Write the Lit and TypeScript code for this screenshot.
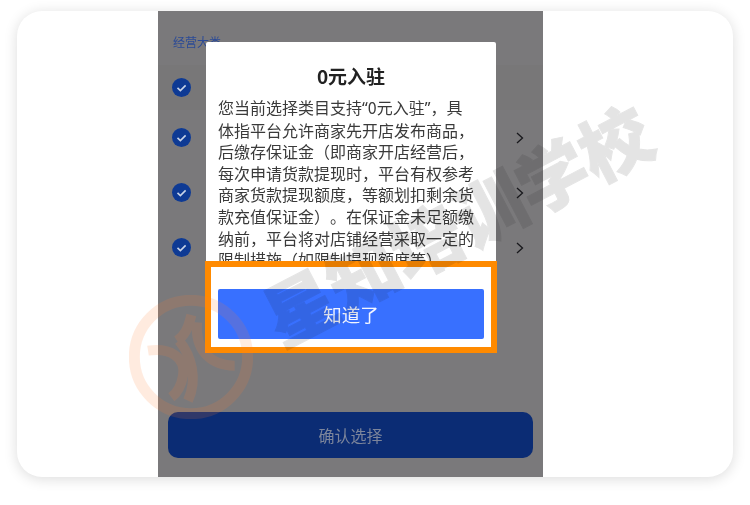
import { LitElement, html, css, svg } from "lit";
import { customElement } from "lit/decorators.js";

const LINES = [
  html`您当前选择类目支持<span class="q">“</span>0元入驻<span class="q">”</span>，具`,
  "体指平台允许商家先开店发布商品，",
  "后缴存保证金（即商家开店经营后，",
  "每次申请货款提现时，平台有权参考",
  "商家货款提现额度，等额划扣剩余货",
  "款充值保证金）。在保证金未足额缴",
  "纳前，平台将对店铺经营采取一定的",
  "限制措施（如限制提现额度等）",
];

@customElement("app-root")
export class AppRoot extends LitElement {
  static styles = css`
    :host {
      display: block;
      width: 750px;
      height: 505px;
      background: #fff;
      font-family: "Noto Sans CJK SC", "Noto Sans", sans-serif;
      overflow: hidden;
      text-spacing-trim: space-all;
    }
    .stage {
      position: relative;
      height: 505px;
      padding: 11px 17px 28px;
      box-sizing: border-box;
    }
    .card {
      height: 466px;
      border-radius: 25px;
      background: #fff;
      box-shadow: 0 2px 14px rgba(0, 0, 0, 0.14);
      display: flex;
      padding-left: 141px;
      overflow: hidden;
    }
    .phone {
      position: relative;
      width: 385px;
      background: #7a797b;
      display: flex;
      flex-direction: column;
      filter: blur(0.3px);
    }
    .phone-top {
      flex: none;
      padding: 22px 15px 0;
      height: 54px;
      box-sizing: border-box;
      font-size: 12px;
      line-height: 18px;
      color: #2b4a96;
    }
    .rows {
      flex: 1;
      display: flex;
      flex-direction: column;
    }
    .row {
      display: flex;
      align-items: center;
      justify-content: space-between;
      height: 55px;
      padding: 0 19px 0 14px;
    }
    .row.first {
      height: 45px;
      background: #787778;
    }
    .check {
      width: 19px;
      height: 19px;
      display: block;
    }
    .chev {
      width: 8px;
      height: 12px;
      display: block;
    }
    .confirm {
      flex: none;
      height: 46px;
      margin: 0 10px 19px;
      border-radius: 10px;
      background: #0b2c74;
      color: #7c859b;
      font-size: 16px;
      display: flex;
      align-items: center;
      justify-content: center;
    }
    .modal {
      position: absolute;
      left: 48px;
      top: 31px;
      width: 290px;
      height: 311px;
      background: #fff;
      border-radius: 2px;
      display: flex;
      flex-direction: column;
    }
    .title {
      flex: none;
      margin-top: 20px;
      height: 28px;
      line-height: 28px;
      text-align: center;
      font-size: 19px;
      font-weight: 600;
      color: #222;
    }
    .body {
      flex: 1;
      min-height: 0;
      margin-top: 7px;
      padding: 0 12px;
      overflow: hidden;
      font-size: 16px;
      line-height: 21.6px;
      color: #3a3a3a;
      white-space: nowrap;
    }
    .line {
      display: block;
    }
    .q {
      font-family: "Noto Sans", sans-serif;
    }
    .action {
      flex: none;
      height: 92px;
      margin: 0 -1px;
      border: 6px solid #ff8a00;
      background: #fff;
      padding: 22px 7px 8px;
      display: flex;
      box-sizing: border-box;
    }
    .know {
      flex: 1;
      background: #3870ff;
      border-radius: 2px;
      color: #f2f5ff;
      font-size: 18.5px;
      display: flex;
      align-items: center;
      justify-content: center;
    }
    .wm {
      position: absolute;
      left: 243px;
      top: 182px;
      width: 426px;
      font-size: 71px;
      line-height: 80px;
      font-weight: 900;
      white-space: nowrap;
      color: #141414;
      opacity: 0.11;
      -webkit-text-stroke: 1px #141414;
      transform: rotate(-27.5deg);
      pointer-events: none;
    }
    .logo {
      position: absolute;
      left: 129px;
      top: 295px;
      width: 124px;
      height: 124px;
      opacity: 0.15;
      pointer-events: none;
    }
  `;

  private check() {
    return html`<svg class="check" viewBox="0 0 19 19">
      <circle cx="9.5" cy="9.5" r="9.5" fill="#0e3a94"></circle>
      <path d="M5.5 9.8l2.9 2.8 5.2-5.2" fill="none" stroke="#c9d4e8" stroke-width="1.6"></path>
    </svg>`;
  }

  private chev() {
    return html`<svg class="chev" viewBox="0 0 8 12">
      <path d="M1 1l5.5 5L1 11" fill="none" stroke="#18181c" stroke-width="1.3"></path>
    </svg>`;
  }

  render() {
    return html`
      <div class="stage">
        <div class="card">
          <div class="phone">
            <div class="phone-top">经营大类</div>
            <div class="rows">
              <div class="row first">${this.check()}</div>
              <div class="row">${this.check()}${this.chev()}</div>
              <div class="row">${this.check()}${this.chev()}</div>
              <div class="row">${this.check()}${this.chev()}</div>
            </div>
            <div class="confirm">确认选择</div>
            <div class="modal">
              <div class="title">0元入驻</div>
              <div class="body">${LINES.map((l) => html`<span class="line">${l}</span>`)}</div>
              <div class="action"><div class="know">知道了</div></div>
            </div>
          </div>
        </div>
        <svg class="logo" viewBox="28 28 372 372" fill="none" stroke="#ff7d32">
          ${svg`
            <circle cx="214" cy="214" r="170" stroke-width="33"></circle>
            <path d="M85 195C150 185 200 215 190 270C185 300 175 320 155 335" stroke-width="30"></path>
            <path d="M215 88C205 130 195 150 172 165" stroke-width="30"></path>
            <path d="M178 165C215 210 235 280 205 345" stroke-width="30"></path>
            <path d="M232 110C225 190 270 240 345 240" stroke-width="30"></path>
          `}
        </svg>
        <div class="wm">星知培训学校</div>
      </div>
    `;
  }
}
